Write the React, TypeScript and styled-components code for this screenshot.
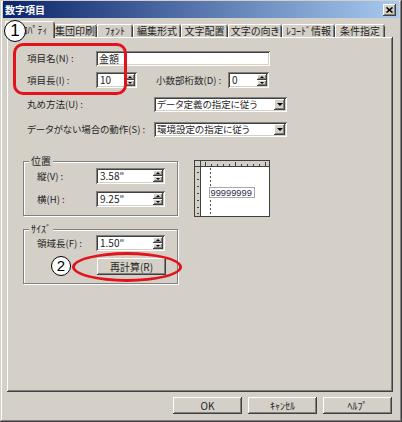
import React from 'react';
import styled, { createGlobalStyle } from 'styled-components';

const GlobalStyle = createGlobalStyle`
  html, body {
    margin: 0;
    padding: 0;
    background: #d4d0c8;
  }
  body {
    font-family: "Noto Sans CJK JP", "Liberation Sans", sans-serif;
    font-size: 10px;
    color: #262626;
    font-feature-settings: "palt";
  }
  * {
    box-sizing: border-box;
  }
`;

const raised = `
  background: #d4d0c8;
  box-shadow: inset -1px -1px #404040, inset 1px 1px #fff, inset -2px -2px #808080, inset 2px 2px #d4d0c8;
`;

const sunken = `
  background: #fff;
  box-shadow: inset 1px 1px #808080, inset -1px -1px #fff, inset 2px 2px #404040, inset -2px -2px #d4d0c8;
`;

const Window = styled.div`
  position: relative;
  width: 402px;
  height: 422px;
  background: #d4d0c8;
  padding: 1px 3px 3px 3px;
  box-shadow: inset -1px -1px #404040, inset 1px 1px #d4d0c8, inset -2px -2px #808080, inset 2px 2px #fff;
  display: flex;
  flex-direction: column;
  overflow: hidden;
`;

const TitleBar = styled.div`
  height: 17px;
  flex: none;
  display: flex;
  align-items: center;
  justify-content: space-between;
  padding: 0 3px 0 2px;
  background: linear-gradient(to right, #0a246a, #a6caf0);
`;

const TitleText = styled.span`
  color: #fff;
  font-weight: bold;
  font-size: 10px;
  line-height: 17px;
`;

const CloseButton = styled.div`
  ${raised}
  width: 13px;
  height: 12px;
  display: flex;
  align-items: center;
  justify-content: center;
`;

const TabRow = styled.div`
  height: 17px;
  margin-top: 2px;
  flex: none;
  display: flex;
  align-items: flex-end;
  padding-left: 2px;
  position: relative;
  z-index: 1;
`;

const Tab = styled.div<{ $w: number; $active?: boolean }>`
  width: ${p => p.$w}px;
  height: ${p => (p.$active ? 17 : 13)}px;
  margin-right: ${p => (p.$active ? -2 : 0)}px;
  margin-bottom: ${p => (p.$active ? -1 : 0)}px;
  background: #d4d0c8;
  border-radius: 2px 2px 0 0;
  box-shadow: inset 1px 0 #fff, inset 0 1px #fff, inset -1px 0 #404040, inset -2px 0 #808080;
  text-align: center;
  font-size: 10px;
  line-height: ${p => (p.$active ? 17 : 13)}px;
  white-space: nowrap;
  ${p => (p.$active ? 'position: relative; z-index: 2;' : '')}
`;

const Panel = styled.div`
  width: 386px;
  height: 355px;
  flex: none;
  margin-left: 4px;
  padding: 14px 0 0 16px;
  display: flex;
  flex-direction: column;
  box-shadow: inset -1px -1px #404040, inset 1px 1px #fff, inset -2px -2px #808080, inset 2px 2px #d4d0c8;
`;

const Row = styled.div<{ $h: number; $gap: number }>`
  display: flex;
  align-items: center;
  height: ${p => p.$h}px;
  margin-bottom: ${p => p.$gap}px;
  padding-left: 4px;
`;

const Label = styled.span<{ $w: number; $ml?: number }>`
  width: ${p => p.$w}px;
  margin-left: ${p => p.$ml ?? 0}px;
  flex: none;
  font-size: 9.5px;
  line-height: 15px;
  white-space: nowrap;
`;

const TextField = styled.div<{ $w: number }>`
  ${sunken}
  width: ${p => p.$w}px;
  height: 15px;
  padding: 0 3px;
  font-size: 10px;
  line-height: 15px;
  white-space: nowrap;
`;

const SpinBox = styled.div<{ $w: number }>`
  ${sunken}
  width: ${p => p.$w}px;
  height: 16px;
  padding: 2px;
  display: flex;
  flex: none;
`;

const SpinValue = styled.span`
  flex: 1;
  padding-left: 2px;
  font-size: 10px;
  line-height: 12px;
  white-space: nowrap;
`;

const SpinButtons = styled.div`
  width: 10px;
  display: flex;
  flex-direction: column;
`;

const SpinHalf = styled.div<{ $down?: boolean }>`
  ${raised}
  flex: 1;
  display: flex;
  align-items: center;
  justify-content: center;
  &::after {
    content: '';
    border-left: 2px solid transparent;
    border-right: 2px solid transparent;
    ${p => (p.$down ? 'border-top: 2px solid #000;' : 'border-bottom: 2px solid #000;')}
  }
`;

const Select = styled.div`
  ${sunken}
  width: 133px;
  height: 15px;
  padding: 2px;
  display: flex;
`;

const SelectText = styled.span`
  flex: 1;
  font-size: 9.5px;
  line-height: 11px;
  white-space: nowrap;
  padding-left: 1px;
`;

const DropButton = styled.div`
  ${raised}
  width: 11px;
  display: flex;
  align-items: center;
  justify-content: center;
  &::after {
    content: '';
    border-left: 3px solid transparent;
    border-right: 3px solid transparent;
    border-top: 3px solid #000;
  }
`;

const GroupArea = styled.div`
  display: flex;
  align-items: flex-start;
  margin-top: 18px;
`;

const GroupBox = styled.fieldset<{ $mt?: number }>`
  width: 155px;
  margin: ${p => p.$mt ?? 0}px 0 0 0;
  padding: 0 0 8px 5px;
  border: 1px solid #808080;
  box-shadow: inset 1px 1px #fff, 1px 1px #fff;
  min-inline-size: 0;
`;

const Legend = styled.legend`
  padding: 0 2px;
  font-size: 10px;
  line-height: 12px;
  background: #d4d0c8;
`;

const GroupRow = styled.div<{ $mt: number }>`
  display: flex;
  align-items: center;
  margin-top: ${p => p.$mt}px;
  padding-left: 8px;
`;

const Button = styled.div<{ $w: number }>`
  ${raised}
  width: ${p => p.$w}px;
  height: 17px;
  flex: none;
  text-align: center;
  font-size: 10px;
  line-height: 17px;
  white-space: nowrap;
`;

const Preview = styled.div`
  margin: 5px 0 0 16px;
  width: 76px;
  height: 57px;
`;

const ButtonRow = styled.div`
  display: flex;
  justify-content: flex-end;
  gap: 6px;
  margin-top: 5px;
  padding-right: 7px;
`;

const Marker = styled.div<{ $x: number; $y: number; $size: number }>`
  position: absolute;
  left: ${p => p.$x}px;
  top: ${p => p.$y}px;
  width: ${p => p.$size}px;
  height: ${p => p.$size}px;
  border-radius: 50%;
  border: 1.5px solid #000;
  background: #fff;
  color: #000;
  font-family: "Liberation Sans", sans-serif;
  font-size: ${p => p.$size - 5}px;
  line-height: ${p => p.$size - 3}px;
  text-align: center;
  z-index: 5;
`;

const RedMark = styled.div<{ $x: number; $y: number; $w: number; $h: number; $ellipse?: boolean }>`
  position: absolute;
  left: ${p => p.$x}px;
  top: ${p => p.$y}px;
  width: ${p => p.$w}px;
  height: ${p => p.$h}px;
  border: 3px solid #e3121b;
  border-radius: ${p => (p.$ellipse ? '50%' : '10px')};
  pointer-events: none;
  z-index: 4;
`;

const Spin = ({ value, w }: { value: string; w: number }) => (
  <SpinBox $w={w}>
    <SpinValue>{value}</SpinValue>
    <SpinButtons>
      <SpinHalf />
      <SpinHalf $down />
    </SpinButtons>
  </SpinBox>
);

const Dropdown = ({ value }: { value: string }) => (
  <Select>
    <SelectText>{value}</SelectText>
    <DropButton />
  </Select>
);

const PreviewDrawing = () => {
  const topTicks = [11, 17, 23, 29, 35, 41, 47, 53, 59, 65, 71];
  const leftTicks = [12, 19, 26, 33, 40, 47, 53];
  return (
    <svg width="76" height="57" viewBox="0 0 76 57">
      <rect x="0.5" y="0.5" width="75" height="56" fill="#fff" stroke="#404040" />
      <rect x="1" y="1" width="74" height="5" fill="#d4d0c8" />
      <line x1="1" y1="6.5" x2="75" y2="6.5" stroke="#404040" />
      <rect x="1" y="7" width="5" height="49" fill="#d4d0c8" />
      <line x1="6.5" y1="1" x2="6.5" y2="56" stroke="#404040" />
      {topTicks.map((x, i) => (
        <line key={x} x1={x + 0.5} y1={i % 5 === 0 ? 2 : 4} x2={x + 0.5} y2="6" stroke="#404040" />
      ))}
      {leftTicks.map(y => (
        <line key={y} x1="3" y1={y + 0.5} x2="5" y2={y + 0.5} stroke="#404040" />
      ))}
      <line x1="16.5" y1="8" x2="16.5" y2="55" stroke="#505050" strokeDasharray="2 2" />
      <rect x="15.5" y="27.5" width="45" height="10" fill="#fff" stroke="#a8a8a8" />
      <text x="16.5" y="35.8" fontFamily="Liberation Sans, sans-serif" fontSize="9.3" fill="#2a2a48">
        99999999
      </text>
    </svg>
  );
};

const tabs = [
  { label: 'ﾌﾟﾛﾊﾟﾃｨ', w: 50, active: true },
  { label: '集団印刷', w: 44 },
  { label: 'ﾌｫﾝﾄ', w: 36 },
  { label: '編集形式', w: 48 },
  { label: '文字配置', w: 47 },
  { label: '文字の向き', w: 54 },
  { label: 'ﾚｺｰﾄﾞ情報', w: 53 },
  { label: '条件指定', w: 50 },
];

const App = () => {
  return (
    <>
      <GlobalStyle />
      <Window>
        <TitleBar>
          <TitleText>数字項目</TitleText>
          <CloseButton>
            <svg width="7" height="6" viewBox="0 0 7 6">
              <path d="M0.5 0.5 L6.5 5.5 M6.5 0.5 L0.5 5.5" stroke="#000" strokeWidth="1.6" />
            </svg>
          </CloseButton>
        </TitleBar>

        <TabRow>
          {tabs.map(t => (
            <Tab key={t.label} $w={t.w} $active={t.active}>
              {t.label}
            </Tab>
          ))}
        </TabRow>

        <Panel>
          <Row $h={15} $gap={6}>
            <Label $w={69}>項目名(N) :</Label>
            <TextField $w={174}>金額</TextField>
          </Row>
          <Row $h={16} $gap={9}>
            <Label $w={69}>項目長(I) :</Label>
            <Spin value="10" w={41} />
            <Label $w={72} $ml={19}>小数部桁数(D) :</Label>
            <Spin value="0" w={41} />
          </Row>
          <Row $h={15} $gap={10}>
            <Label $w={127}>丸め方法(U) :</Label>
            <Dropdown value="データ定義の指定に従う" />
          </Row>
          <Row $h={15} $gap={0}>
            <Label $w={127}>データがない場合の動作(S) :</Label>
            <Dropdown value="環境設定の指定に従う" />
          </Row>

          <GroupArea>
            <GroupBox>
              <Legend>位置</Legend>
              <GroupRow $mt={1}>
                <Label $w={59}>縦(V) :</Label>
                <Spin value={'3.58"'} w={69} />
              </GroupRow>
              <GroupRow $mt={7}>
                <Label $w={59}>横(H) :</Label>
                <Spin value={'9.25"'} w={69} />
              </GroupRow>
            </GroupBox>
            <Preview>
              <PreviewDrawing />
            </Preview>
          </GroupArea>

          <GroupBox $mt={6}>
            <Legend>ｻｲｽﾞ</Legend>
            <GroupRow $mt={0}>
              <Label $w={59}>領域長(F) :</Label>
              <Spin value={'1.50"'} w={69} />
            </GroupRow>
            <GroupRow $mt={7}>
              <Label $w={60} />
              <Button $w={69}>再計算(R)</Button>
            </GroupRow>
          </GroupBox>
        </Panel>

        <ButtonRow>
          <Button $w={69}>OK</Button>
          <Button $w={69}>ｷｬﾝｾﾙ</Button>
          <Button $w={69}>ﾍﾙﾌﾟ</Button>
        </ButtonRow>

        <RedMark $x={13} $y={43} $w={114} $h={52} />
        <RedMark $x={72} $y={252} $w={110} $h={30} $ellipse />
        <Marker $x={4} $y={20} $size={22}>1</Marker>
        <Marker $x={51} $y={256} $size={20}>2</Marker>
      </Window>
    </>
  );
};

export default App;
